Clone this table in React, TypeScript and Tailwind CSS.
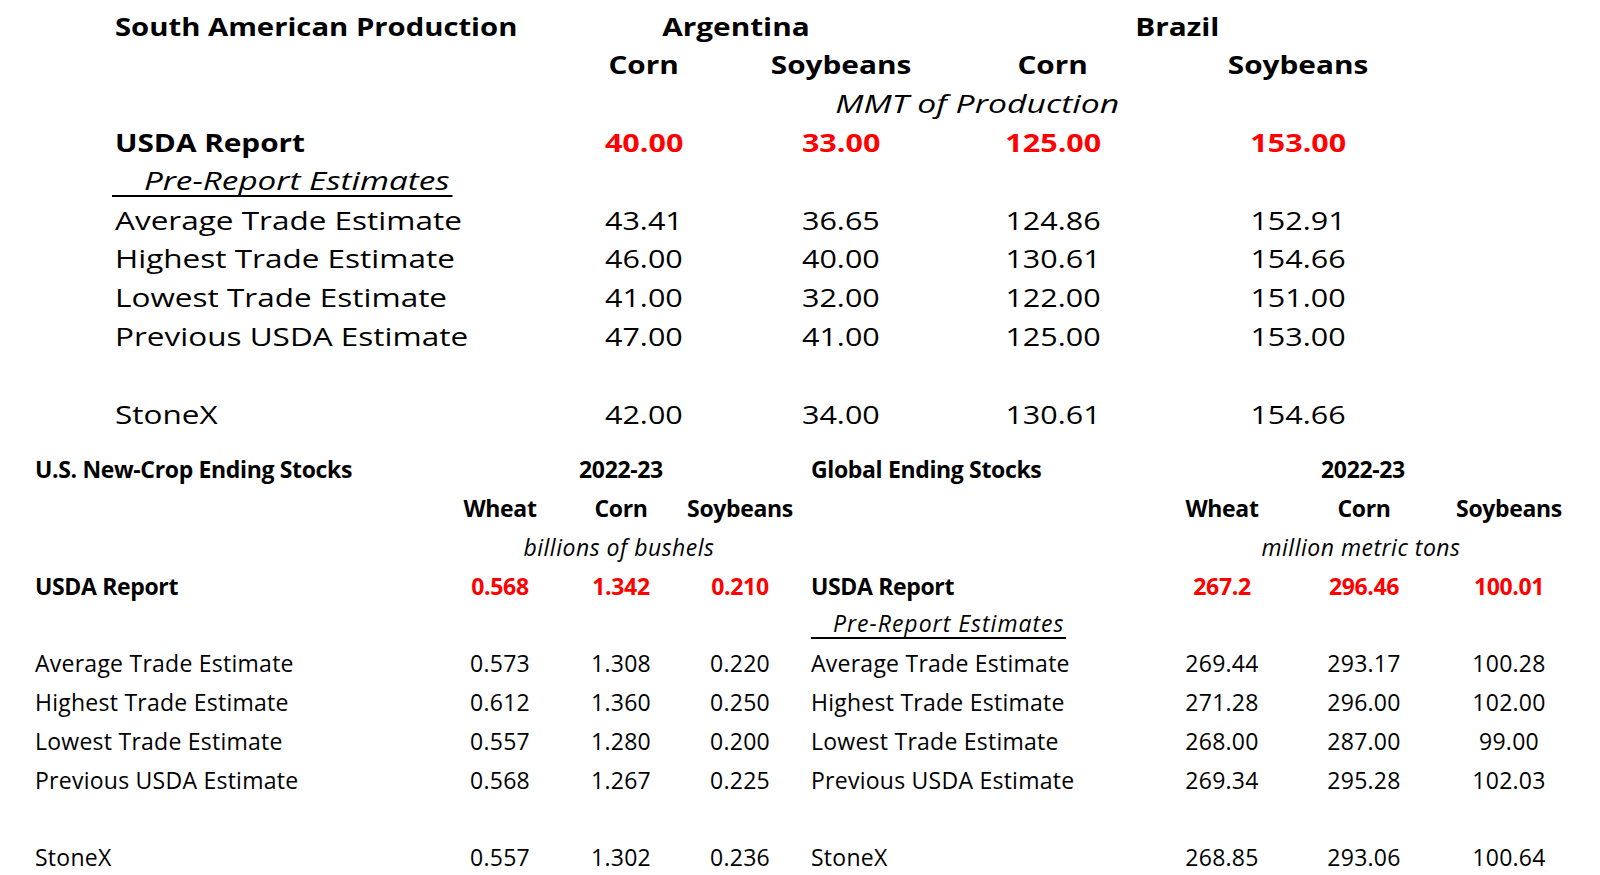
const TOP_FONT = "font-['Open_Sans',sans-serif] text-[25px]";
const BOT_FONT = "font-['Open_Sans',sans-serif] text-[23px] tracking-[0.25px]";
const BOT_BOLD = "font-bold tracking-[-0.35px]";
const BOT_ITAL = "italic tracking-[0.5px]";
const RED = "text-[#ff0000]";

// the top table is a horizontally stretched copy, so its text is widened
const WIDE_REG = "scale-x-[1.26]";
const WIDE_BOLD = "scale-x-[1.19]";
const WIDE_TITLE = "scale-x-[1.17]";
const WIDE_NUM = "scale-x-[1.22]";
const WIDE_ITAL = "scale-x-[1.35]";

const southRows = [
  ["Average Trade Estimate", "43.41", "36.65", "124.86", "152.91"],
  ["Highest Trade Estimate", "46.00", "40.00", "130.61", "154.66"],
  ["Lowest Trade Estimate", "41.00", "32.00", "122.00", "151.00"],
  ["Previous USDA Estimate", "47.00", "41.00", "125.00", "153.00"],
];

const usRows = [
  ["Average Trade Estimate", "0.573", "1.308", "0.220"],
  ["Highest Trade Estimate", "0.612", "1.360", "0.250"],
  ["Lowest Trade Estimate", "0.557", "1.280", "0.200"],
  ["Previous USDA Estimate", "0.568", "1.267", "0.225"],
];

const globalRows = [
  ["Average Trade Estimate", "269.44", "293.17", "100.28"],
  ["Highest Trade Estimate", "271.28", "296.00", "102.00"],
  ["Lowest Trade Estimate", "268.00", "287.00", "99.00"],
  ["Previous USDA Estimate", "269.34", "295.28", "102.03"],
];

// column widths: label | values...
const TOP_COLS = ["w-[451px]", "w-[156px]", "w-[238px]", "w-[186px]", "w-[304px]"];
const US_COLS = ["w-[405px]", "w-[120px]", "w-[122px]", "w-[116px]"];
const GL_COLS = ["w-[353px]", "w-[116px]", "w-[168px]", "w-[122px]"];

function Cell({
  w,
  left,
  wide = "",
  className = "",
  children,
}: {
  w: string;
  left?: boolean;
  wide?: string;
  className?: string;
  children?: React.ReactNode;
}) {
  return (
    <div className={`${w} shrink-0 ${left ? "text-left" : "text-center"} ${className}`}>
      <span className={`inline-block ${left ? "origin-left" : "origin-center"} ${wide}`}>
        {children}
      </span>
    </div>
  );
}

function Row({
  cells,
  cols,
  className = "",
  valueClass = "",
  labelWide = "",
  valueWide = "",
}: {
  cells: string[];
  cols: string[];
  className?: string;
  valueClass?: string;
  labelWide?: string;
  valueWide?: string;
}) {
  return (
    <div className={`flex h-[38.8px] items-center whitespace-nowrap ${className}`}>
      {cells.map((c, i) => (
        <Cell
          key={i}
          w={cols[i]}
          left={i === 0}
          wide={i === 0 ? labelWide : valueWide}
          className={i === 0 ? "" : valueClass}
        >
          {c}
        </Cell>
      ))}
    </div>
  );
}

function Blank() {
  return <div className="h-[38.8px]" />;
}

function SouthAmerica() {
  return (
    <section className={`pl-[115px] pt-[7px] text-black ${TOP_FONT}`}>
      <div className="flex h-[38.8px] items-center whitespace-nowrap font-bold">
        <Cell w="w-[451px]" left wide={WIDE_TITLE}>South American Production</Cell>
        <Cell w="w-[340px]" wide={WIDE_BOLD}>Argentina</Cell>
        <Cell w="w-[542px]" wide={WIDE_BOLD}>Brazil</Cell>
      </div>
      <Row
        cells={["", "Corn", "Soybeans", "Corn", "Soybeans"]}
        cols={TOP_COLS}
        className="font-bold"
        valueWide={WIDE_BOLD}
      />
      <div className="flex h-[38.8px] items-center whitespace-nowrap italic">
        <div className="w-[451px] shrink-0" />
        <Cell w="w-[822px]" wide={WIDE_ITAL}>MMT of Production</Cell>
      </div>
      <Row
        cells={["USDA Report", "40.00", "33.00", "125.00", "153.00"]}
        cols={TOP_COLS}
        className="font-bold"
        valueClass={RED}
        labelWide={WIDE_BOLD}
        valueWide={WIDE_NUM}
      />
      <div className="-ml-[3px] flex h-[38.8px] items-center whitespace-nowrap">
        <span className="inline-block origin-left scale-x-[1.33] border-b-2 border-black pl-[24px] pr-[2px] italic leading-[29px]">
          Pre-Report Estimates
        </span>
      </div>
      {southRows.map((r) => (
        <Row key={r[0]} cells={r} cols={TOP_COLS} labelWide={WIDE_REG} valueWide={WIDE_NUM} />
      ))}
      <Blank />
      <Row
        cells={["StoneX", "42.00", "34.00", "130.61", "154.66"]}
        cols={TOP_COLS}
        labelWide={WIDE_REG}
        valueWide={WIDE_NUM}
      />
    </section>
  );
}

function UsStocks() {
  return (
    <div className="w-[776px] shrink-0">
      <div className={`flex h-[38.8px] items-center whitespace-nowrap ${BOT_BOLD}`}>
        <Cell w="w-[405px]" left>U.S. New-Crop Ending Stocks</Cell>
        <Cell w="w-[362px]">2022-23</Cell>
      </div>
      <Row cells={["", "Wheat", "Corn", "Soybeans"]} cols={US_COLS} className={BOT_BOLD} />
      <div className={`flex h-[38.8px] items-center whitespace-nowrap ${BOT_ITAL}`}>
        <div className="w-[405px] shrink-0" />
        <Cell w="w-[358px]">billions of bushels</Cell>
      </div>
      <Row
        cells={["USDA Report", "0.568", "1.342", "0.210"]}
        cols={US_COLS}
        className={BOT_BOLD}
        valueClass={RED}
      />
      <Blank />
      {usRows.map((r) => (
        <Row key={r[0]} cells={r} cols={US_COLS} />
      ))}
      <Blank />
      <Row cells={["StoneX", "0.557", "1.302", "0.236"]} cols={US_COLS} />
    </div>
  );
}

function GlobalStocks() {
  return (
    <div className="shrink-0">
      <div className={`flex h-[38.8px] items-center whitespace-nowrap ${BOT_BOLD}`}>
        <Cell w="w-[353px]" left>Global Ending Stocks</Cell>
        <Cell w="w-[398px]">2022-23</Cell>
      </div>
      <Row cells={["", "Wheat", "Corn", "Soybeans"]} cols={GL_COLS} className={BOT_BOLD} />
      <div className={`flex h-[38.8px] items-center whitespace-nowrap ${BOT_ITAL}`}>
        <div className="w-[353px] shrink-0" />
        <Cell w="w-[394px]">million metric tons</Cell>
      </div>
      <Row
        cells={["USDA Report", "267.2", "296.46", "100.01"]}
        cols={GL_COLS}
        className={BOT_BOLD}
        valueClass={RED}
      />
      <div className="flex h-[38.8px] items-center whitespace-nowrap">
        <span className="inline-block border-b-2 border-black pl-[22px] pr-[2px] italic leading-[27px] tracking-[1px]">
          Pre-Report Estimates
        </span>
      </div>
      {globalRows.map((r) => (
        <Row key={r[0]} cells={r} cols={GL_COLS} />
      ))}
      <Blank />
      <Row cells={["StoneX", "268.85", "293.06", "100.64"]} cols={GL_COLS} />
    </div>
  );
}

export default function App() {
  return (
    <div className="h-[875px] w-[1600px] overflow-hidden bg-white">
      <SouthAmerica />
      <section className={`mt-[16.4px] flex pl-[35px] text-black ${BOT_FONT}`}>
        <UsStocks />
        <GlobalStocks />
      </section>
    </div>
  );
}
